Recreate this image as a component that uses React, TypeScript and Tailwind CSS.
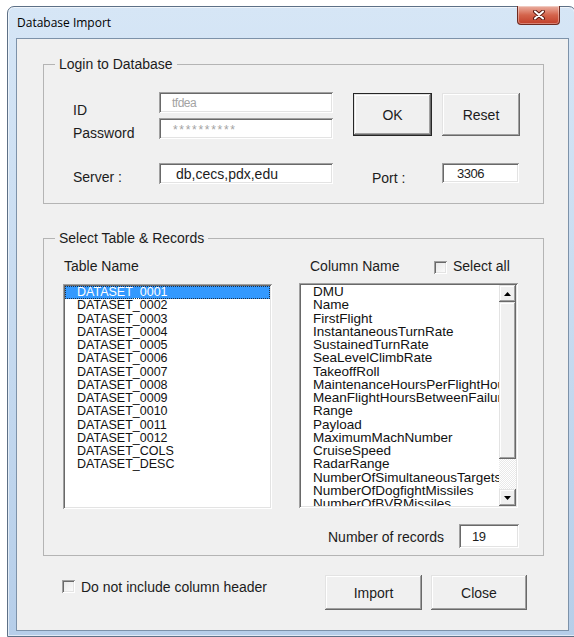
const tables = [
  "DATASET_0001",
  "DATASET_0002",
  "DATASET_0003",
  "DATASET_0004",
  "DATASET_0005",
  "DATASET_0006",
  "DATASET_0007",
  "DATASET_0008",
  "DATASET_0009",
  "DATASET_0010",
  "DATASET_0011",
  "DATASET_0012",
  "DATASET_COLS",
  "DATASET_DESC",
];

const columns = [
  "DMU",
  "Name",
  "FirstFlight",
  "InstantaneousTurnRate",
  "SustainedTurnRate",
  "SeaLevelClimbRate",
  "TakeoffRoll",
  "MaintenanceHoursPerFlightHour",
  "MeanFlightHoursBetweenFailure",
  "Range",
  "Payload",
  "MaximumMachNumber",
  "CruiseSpeed",
  "RadarRange",
  "NumberOfSimultaneousTargets",
  "NumberOfDogfightMissiles",
  "NumberOfBVRMissiles",
];

// classic 3D edges
const raised =
  "shadow-[inset_-1px_-1px_0_#696969,inset_1px_1px_0_#e3e3e3,inset_-2px_-2px_0_#a0a0a0,inset_2px_2px_0_#ffffff]";
const sunken =
  "shadow-[inset_1px_1px_0_#a0a0a0,inset_-1px_-1px_0_#ffffff,inset_2px_2px_0_#696969,inset_-2px_-2px_0_#e3e3e3]";

type BoxProps = { className?: string; children?: React.ReactNode };

const TextBox = ({ className = "", children }: BoxProps) => (
  <div className={`bg-white flex ${sunken} ${className}`}>{children}</div>
);

const Button = ({ className = "", children, isDefault = false }: BoxProps & { isDefault?: boolean }) => (
  <div
    className={`bg-[#f0f0f0] flex items-center justify-center text-[14px] leading-[16px] text-[#1c1c1c] ${
      isDefault ? "border border-[#262626]" : ""
    } ${className}`}
  >
    <div className={`w-full h-full flex items-center justify-center ${raised}`}>{children}</div>
  </div>
);

const CheckBox = ({ className = "" }: BoxProps) => (
  <div className={`w-[13px] h-[13px] shrink-0 bg-linear-to-br from-[#e4e4e4] to-white ${sunken} ${className}`} />
);

const Arrow = ({ up }: { up?: boolean }) => (
  <svg width="7" height="4" viewBox="0 0 7 4">
    <path d={up ? "M3.5 0 L7 4 L0 4 Z" : "M0 0 L7 0 L3.5 4 Z"} fill="#000" />
  </svg>
);

const ScrollButton = ({ up }: { up?: boolean }) => (
  <div className={`h-[17px] shrink-0 bg-[#f0f0f0] flex items-center justify-center ${raised}`}>
    <Arrow up={up} />
  </div>
);

export default function App() {
  return (
    <div className="w-[574px] h-[637px] bg-white overflow-hidden font-['Liberation_Sans',Arial,sans-serif] text-[#1c1c1c]">
      {/* window frame */}
      <div className="ml-[7px] mt-[6px] w-[569px] h-[631px] rounded-t-[7px] border border-[#5d7086] bg-linear-to-b from-[#d6e6f6] via-[#c7dbf0] to-[#b6cee9] pl-[8px] pr-[6px] pb-[5px] flex flex-col shadow-[inset_0_0_0_1px_rgba(255,255,255,0.6)]">
        <div className="h-[31px] flex items-start">
          <span className="ml-px mt-[8px] text-[12px] leading-[16px] text-black font-['Open_Sans',sans-serif]">
            Database Import
          </span>
          <div className="flex-1" />
          <div className="-mt-px mr-[9px] w-[43px] h-[19px] rounded-b-[4px] border border-t-0 border-[#6e2a20] bg-linear-to-b from-[#eab0a2] via-[#d4644c] to-[#c13d28] flex items-center justify-center shadow-[inset_0_0_0_1px_rgba(255,255,255,0.35)]">
            <svg width="12" height="10" viewBox="0 0 12 10">
              <path d="M2 1.5 L10 8.5 M10 1.5 L2 8.5" stroke="#5a1a12" strokeWidth="4" strokeLinecap="round" />
              <path d="M2 1.5 L10 8.5 M10 1.5 L2 8.5" stroke="#ffffff" strokeWidth="2" strokeLinecap="round" />
            </svg>
          </div>
        </div>

        {/* client area */}
        <div className="flex-1 border border-[#7d92a9] bg-[#f0f0f0] flex flex-col text-[14px] leading-[16px]">
          <fieldset className="ml-[26px] mt-[17px] w-[501px] border border-[#b4b4b4] pl-[11px] pb-[17px]">
            <legend className="px-[4px] text-[14px] leading-[16px]">Login to Database</legend>
            <div className="mt-[20px] ml-[18px] flex items-start">
              <div className="w-[86px] flex flex-col">
                <span className="mt-[10px]">ID</span>
                <span className="mt-[7px]">Password</span>
              </div>
              <div className="w-[174px] flex flex-col gap-[5px]">
                <TextBox className="h-[21px] items-center pl-[13px] text-[12px] tracking-[-0.5px] text-[#a3a3a3]">
                  tfdea
                </TextBox>
                <TextBox className="h-[21px] items-center pl-[14px] pt-[2px] text-[12px] tracking-[1.7px] text-[#a3a3a3]">
                  **********
                </TextBox>
              </div>
              <Button isDefault className="ml-[20px] mt-px w-[79px] h-[43px]">
                OK
              </Button>
              <Button className="ml-[10px] mt-px w-[78px] h-[43px]">Reset</Button>
            </div>
            <div className="mt-[22px] ml-[18px] flex items-start">
              <span className="w-[86px] pt-[6px]">Server :</span>
              <TextBox className="w-[174px] h-[21px] items-center pl-[17px]">db,cecs,pdx,edu</TextBox>
              <span className="ml-[39px] w-[70px] pt-[7px]">Port :</span>
              <TextBox className="w-[77px] h-[20px] items-center pl-[15px] pt-[2px] text-[13px] tracking-[-0.5px]">
                3306
              </TextBox>
            </div>
          </fieldset>

          <fieldset className="ml-[26px] mt-[26px] w-[501px] border border-[#b4b4b4] pl-[11px] pb-[7px]">
            <legend className="px-[4px] text-[14px] leading-[16px]">Select Table &amp; Records</legend>
            <div className="mt-[12px] flex items-start">
              <span className="ml-[9px] w-[246px]">Table Name</span>
              <span className="w-[124px]">Column Name</span>
              <CheckBox className="mt-[3px]" />
              <span className="ml-[6px]">Select all</span>
            </div>
            <div className="mt-[9px] flex items-start">
              <div className={`ml-[8px] mt-px w-[209px] h-[225px] bg-white p-[2px] ${sunken}`}>
                <div className="h-full overflow-hidden text-[12.5px] text-[#111]">
                  {tables.map((t, i) => (
                    <div
                      key={t}
                      className={`h-[13.25px] leading-[13.25px] pl-[12px] whitespace-nowrap ${
                        i === 0
                          ? "bg-[#3399ff] text-white outline-1 outline-dotted -outline-offset-1 outline-[#1d2f45]"
                          : ""
                      }`}
                    >
                      {t}
                    </div>
                  ))}
                </div>
              </div>
              <div className={`ml-[27px] w-[219px] h-[225px] bg-white p-[2px] flex ${sunken}`}>
                <div className="flex-1 h-full overflow-hidden text-[13.5px] text-[#111]">
                  {columns.map((c) => (
                    <div key={c} className="h-[13.25px] leading-[13.25px] pl-[12px] whitespace-nowrap">
                      {c}
                    </div>
                  ))}
                </div>
                <div className="w-[17px] h-full flex flex-col">
                  <ScrollButton up />
                  <div className={`h-[157px] shrink-0 bg-[#f0f0f0] ${raised}`} />
                  <div className="flex-1 bg-[repeating-conic-gradient(#e9e9e9_0%_25%,#ffffff_0%_50%)] bg-size-[2px_2px]" />
                  <ScrollButton />
                </div>
              </div>
            </div>
            <div className="mt-[15px] ml-[273px] flex items-start">
              <span className="w-[131px] pt-[5px]">Number of records</span>
              <TextBox className="w-[60px] h-[24px] pl-[13px] pt-[5px] text-[13px] tracking-[-0.5px]">19</TextBox>
            </div>
          </fieldset>

          <div className="mt-[19px] ml-[45px] flex items-start">
            <div className="w-[263px] flex items-start">
              <CheckBox className="mt-[5px]" />
              <span className="ml-[6px] pt-[4px]">Do not include column header</span>
            </div>
            <Button className="w-[97px] h-[35px]">Import</Button>
            <Button className="ml-[9px] w-[96px] h-[35px]">Close</Button>
          </div>
        </div>
      </div>
    </div>
  );
}
